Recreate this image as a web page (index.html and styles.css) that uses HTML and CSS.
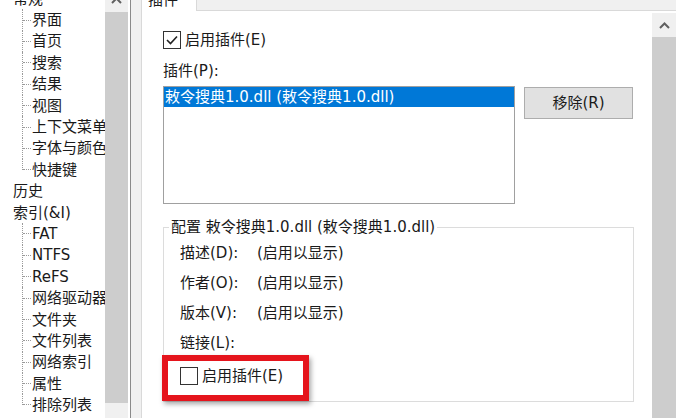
FILE: index.html
```html
<!DOCTYPE html>
<html lang="zh-CN">
<head>
<meta charset="utf-8">
<title>插件</title>
<link rel="stylesheet" href="styles.css">
</head>
<body>
<div class="app">
  <div class="tree">
    <div class="tree-view">
      <ul class="tree-list">
        <li class="node top">常规</li>
        <li class="node child"><span class="conn"></span><span class="label">界面</span></li>
        <li class="node child"><span class="conn"></span><span class="label">首页</span></li>
        <li class="node child"><span class="conn"></span><span class="label">搜索</span></li>
        <li class="node child"><span class="conn"></span><span class="label">结果</span></li>
        <li class="node child"><span class="conn"></span><span class="label">视图</span></li>
        <li class="node child"><span class="conn"></span><span class="label">上下文菜单</span></li>
        <li class="node child"><span class="conn"></span><span class="label">字体与颜色</span></li>
        <li class="node child last"><span class="conn"></span><span class="label">快捷键</span></li>
        <li class="node top">历史</li>
        <li class="node top">索引(&amp;I)</li>
        <li class="node child"><span class="conn"></span><span class="label">FAT</span></li>
        <li class="node child"><span class="conn"></span><span class="label">NTFS</span></li>
        <li class="node child"><span class="conn"></span><span class="label">ReFS</span></li>
        <li class="node child"><span class="conn"></span><span class="label">网络驱动器</span></li>
        <li class="node child"><span class="conn"></span><span class="label">文件夹</span></li>
        <li class="node child"><span class="conn"></span><span class="label">文件列表</span></li>
        <li class="node child"><span class="conn"></span><span class="label">网络索引</span></li>
        <li class="node child"><span class="conn"></span><span class="label">属性</span></li>
        <li class="node child last"><span class="conn"></span><span class="label">排除列表</span></li>
      </ul>
    </div>
    <div class="tree-sb">
      <div class="sb-arrow tree-arrow">
        <svg width="11" height="7" viewBox="0 0 11 7"><polyline points="1,6 5.5,1.5 10,6" fill="none" stroke="#606060" stroke-width="2"/></svg>
      </div>
      <div class="sb-thumb tree-thumb"></div>
    </div>
  </div>

  <div class="panel">
    <div class="tabs">
      <div class="tab">插件</div>
    </div>
    <div class="panel-body">
      <div class="content">
        <div class="check-row">
          <span class="checkbox">
            <svg width="16" height="16" viewBox="0 0 16 16"><polyline points="3,8 6.5,11.5 13,4.5" fill="none" stroke="#222" stroke-width="1.6"/></svg>
          </span>
          <span>启用插件(E)</span>
        </div>
        <div class="field-label">插件(P):</div>
        <div class="list-row">
          <div class="listbox">
            <div class="list-item selected">敕令搜典1.0.dll (敕令搜典1.0.dll)</div>
          </div>
          <button class="btn" type="button">移除(R)</button>
        </div>
        <fieldset class="group">
          <legend>配置 敕令搜典1.0.dll (敕令搜典1.0.dll)</legend>
          <div class="info-row first"><span class="info-label">描述(D):</span><span class="info-value">(启用以显示)</span></div>
          <div class="info-row"><span class="info-label">作者(O):</span><span class="info-value">(启用以显示)</span></div>
          <div class="info-row"><span class="info-label">版本(V):</span><span class="info-value">(启用以显示)</span></div>
          <div class="info-row"><span class="info-label">链接(L):</span></div>
          <div class="enable-row">
            <span class="checkbox"></span>
            <span>启用插件(E)</span>
            <div class="highlight"></div>
          </div>
        </fieldset>
      </div>
      <div class="vsb">
        <div class="sb-arrow vsb-arrow">
          <svg width="11" height="7" viewBox="0 0 11 7"><polyline points="1,6 5.5,1.5 10,6" fill="none" stroke="#606060" stroke-width="2"/></svg>
        </div>
        <div class="sb-thumb vsb-thumb"></div>
      </div>
    </div>
  </div>
</div>
</body>
</html>
```

FILE: styles.css
```css
* { box-sizing: border-box; }

html, body {
  margin: 0;
  padding: 0;
  width: 676px;
  height: 418px;
  overflow: hidden;
}

body {
  font-family: "DejaVu Sans", "Noto Sans CJK SC", sans-serif;
  font-size: 15px;
  font-weight: 400;
  color: #1a1a1a;
  background: #f0f0f0;
}

.app {
  display: flex;
  height: 418px;
  overflow: hidden;
  background: #f0f0f0;
}

/* ---------- tree ---------- */
.tree {
  width: 131px;
  flex: none;
  display: flex;
  background: #fff;
  border-right: 1px solid #8a8a8a;
  padding-right: 2px;
  overflow: hidden;
}

.tree-view {
  width: 105px;
  flex: none;
  overflow: hidden;
}

.tree-list {
  list-style: none;
  margin: -12px 0 0 0;
  padding: 0;
}

.node {
  height: 21.4px;
  display: flex;
  align-items: center;
  white-space: nowrap;
  line-height: 20px;
}

.node.top { padding-left: 13px; }

.node.child { padding-left: 22px; }

.conn {
  flex: none;
  align-self: stretch;
  width: 9px;
  margin-right: 1px;
  border-left: 1px dotted #9a9a9a;
  display: flex;
  align-items: center;
}

.conn::after {
  content: "";
  width: 8px;
  border-top: 1px dotted #9a9a9a;
}

.node.last .conn {
  align-self: flex-start;
  height: 50%;
  align-items: flex-end;
}

.tree-sb {
  width: 23px;
  flex: none;
  display: flex;
  flex-direction: column;
  background: #f0f0f0;
}

.sb-arrow {
  flex: none;
  display: flex;
  align-items: center;
  justify-content: center;
}

.tree-arrow {
  height: 23px;
  margin-top: -11px;
}

.sb-thumb { background: #cdcdcd; }

.tree-thumb {
  height: 391px;
  flex: none;
}

/* ---------- panel ---------- */
.panel {
  flex: 1;
  margin-left: 10px;
  display: flex;
  flex-direction: column;
  border-left: 1px solid #d9d9d9;
  min-width: 0;
}

.tabs {
  height: 11px;
  flex: none;
  display: flex;
  align-items: flex-end;
  background: #f0f0f0;
  border-bottom: 1px solid #d9d9d9;
}

.tab {
  width: 55px;
  height: 27px;
  margin-bottom: -1px;
  padding: 6px 0 0 6px;
  line-height: 20px;
  background: #fff;
  border-right: 1px solid #d9d9d9;
}

.panel-body {
  flex: 1;
  display: flex;
  background: #fff;
  padding-top: 2px;
  min-height: 0;
}

.content {
  flex: 1;
  padding: 17px 0 0 21px;
  min-width: 0;
}

.vsb {
  width: 24px;
  flex: none;
  display: flex;
  flex-direction: column;
  background: #f0f0f0;
}

.vsb-arrow { height: 24px; }

.vsb-thumb { flex: 1; }

/* ---------- controls ---------- */
.check-row,
.enable-row {
  display: flex;
  align-items: center;
  line-height: 20px;
}

.check-row { height: 20px; }

.checkbox {
  width: 18px;
  height: 18px;
  flex: none;
  margin-right: 4px;
  border: 1px solid #333;
  background: #fff;
  display: flex;
  align-items: center;
  justify-content: center;
}

.field-label {
  margin-top: 11px;
  line-height: 20px;
}

.list-row {
  display: flex;
  align-items: flex-start;
  margin-top: 5px;
}

.listbox {
  width: 352px;
  height: 118px;
  flex: none;
  border: 1px solid #a0a0a0;
  background: #fff;
}

.list-item {
  height: 20px;
  line-height: 20px;
  padding-left: 1px;
  white-space: nowrap;
}

.list-item.selected {
  background: #0078d7;
  color: #fff;
}

.btn {
  width: 109px;
  height: 32px;
  margin: 1px 0 0 9px;
  padding: 0;
  font: inherit;
  color: #1a1a1a;
  background: #e1e1e1;
  border: 1px solid #adadad;
  line-height: 20px;
}

.group {
  width: 471px;
  margin: 13px 0 0 0;
  padding: 0 0 10px 0;
  border: 1px solid #dcdcdc;
  min-width: 0;
}

.group legend {
  margin-left: 5px;
  padding: 0 2px;
  line-height: 20px;
  white-space: nowrap;
}

.info-row {
  height: 30px;
  line-height: 30px;
  padding-left: 16px;
  display: flex;
  white-space: nowrap;
}

.info-row.first { margin-top: 1px; }

.info-label {
  width: 77px;
  flex: none;
}

.enable-row {
  position: relative;
  height: 30px;
  margin-top: 3px;
  padding-left: 16px;
}

.highlight {
  position: absolute;
  left: -2px;
  top: -6px;
  width: 147px;
  height: 46px;
  border: 6px solid #e5141c;
  box-shadow: 2px 3px 5px rgba(0, 0, 0, 0.35);
  pointer-events: none;
}
```
